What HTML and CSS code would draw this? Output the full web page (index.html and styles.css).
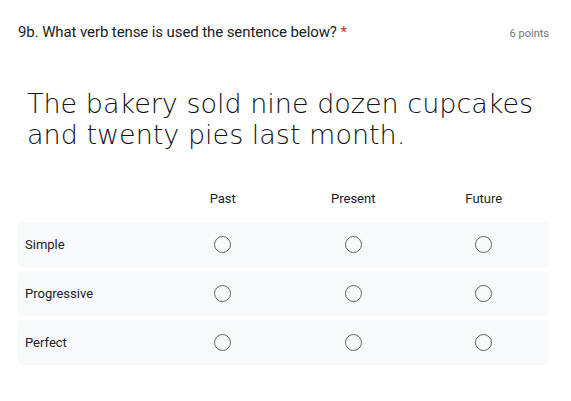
FILE: index.html
```html
<!DOCTYPE html>
<html>
<head>
<meta charset="utf-8">
<link rel="stylesheet" href="styles.css">
</head>
<body>
<div class="card">
  <div class="head">
    <div class="title">9b. What verb tense is used the sentence below? <span class="req">*</span></div>
    <div class="points">6 points</div>
  </div>
  <div class="sentence">The bakery sold nine dozen cupcakes<br>and twenty pies last month.</div>
  <div class="grid">
    <div class="colhead"><span></span><span>Past</span><span>Present</span><span>Future</span></div>
    <div class="row"><span class="label">Simple</span><span class="cell"><i class="radio"></i></span><span class="cell"><i class="radio"></i></span><span class="cell"><i class="radio"></i></span></div>
    <div class="row"><span class="label">Progressive</span><span class="cell"><i class="radio"></i></span><span class="cell"><i class="radio"></i></span><span class="cell"><i class="radio"></i></span></div>
    <div class="row"><span class="label">Perfect</span><span class="cell"><i class="radio"></i></span><span class="cell"><i class="radio"></i></span><span class="cell"><i class="radio"></i></span></div>
  </div>
</div>
</body>
</html>
```
FILE: styles.css
```css
html, body { margin: 0; padding: 0; background: #fff; }
body { font-family: Roboto, "Liberation Sans", sans-serif; color: #202124; }
.card { width: 571px; height: 401px; box-sizing: border-box; padding: 22px 22px 0 18px; }
.head { display: flex; justify-content: space-between; align-items: baseline; }
.title { font-size: 15px; line-height: 20px; letter-spacing: -0.1px; }
.req { color: #d93025; }
.points { font-size: 11px; color: #70757a; }
.sentence { margin-top: 46px; padding-left: 9px; font-family: "DejaVu Sans", sans-serif; font-weight: 200; font-size: 27px; line-height: 31px; color: #111; letter-spacing: 0; }
.grid { margin-top: 37px; display: flex; flex-direction: column; gap: 4px; }
.colhead, .row { display: grid; grid-template-columns: 139.5px 1fr 1fr 1fr; align-items: center; }
.colhead { font-size: 13px; text-align: center; height: 22px; margin-bottom: 9px; }
.row { height: 45px; background: #f8f9fa; border-radius: 4px; font-size: 13px; }
.label { padding-left: 7px; }
.cell { display: flex; justify-content: center; }
.radio { display: block; width: 15px; height: 15px; border: 1.5px solid #5f6368; border-radius: 50%; }
```
